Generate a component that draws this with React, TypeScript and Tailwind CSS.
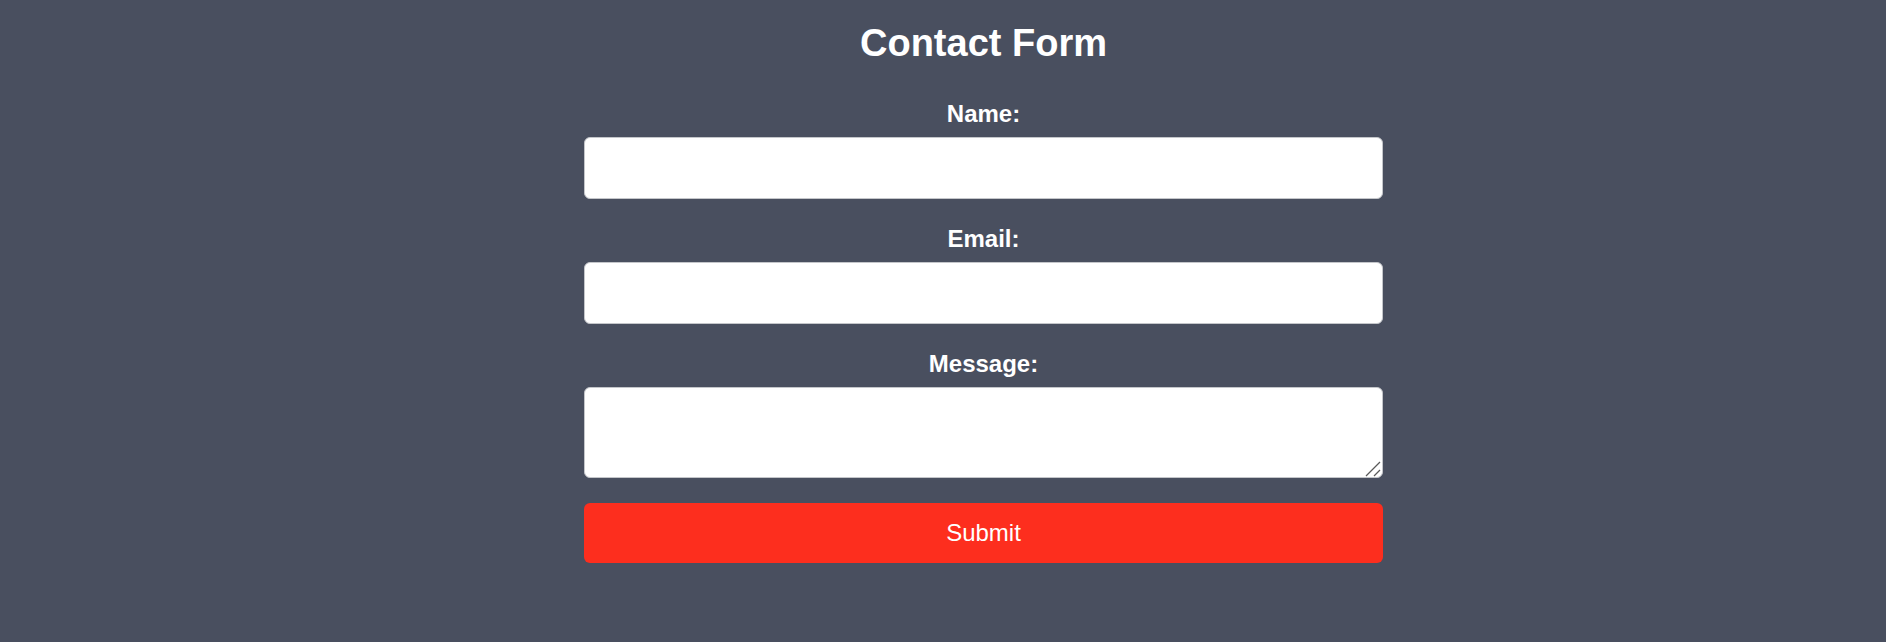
import React from "react";

export default function App() {
  return (
    <div
      className="w-full h-[642px] bg-[#494f5f] flex justify-center pl-[81px]"
      style={{ fontFamily: '"Liberation Sans", Arial, Helvetica, sans-serif' }}
    >
      <form
        className="w-[799px] flex flex-col"
        onSubmit={(e) => e.preventDefault()}
      >
        <h1 className="mt-[21px] text-[38px] leading-[44px] font-bold text-white text-center">
          Contact Form
        </h1>

        <label
          htmlFor="name"
          className="mt-[35px] mb-[9px] text-[24px] leading-[28px] font-bold text-white text-center"
        >
          Name:
        </label>
        <input
          id="name"
          type="text"
          className="h-[62px] w-full bg-white border border-[#c4c6ca] rounded-[6px] mb-[26px] outline-none"
        />

        <label
          htmlFor="email"
          className="mb-[9px] text-[24px] leading-[28px] font-bold text-white text-center"
        >
          Email:
        </label>
        <input
          id="email"
          type="email"
          className="h-[62px] w-full bg-white border border-[#c4c6ca] rounded-[6px] mb-[26px] outline-none"
        />

        <label
          htmlFor="message"
          className="mb-[9px] text-[24px] leading-[28px] font-bold text-white text-center"
        >
          Message:
        </label>
        <div className="relative mb-[25px]">
          <textarea
            id="message"
            className="h-[91px] w-full bg-white border border-[#c4c6ca] rounded-[6px] outline-none block resize-none"
          />
          <svg
            className="absolute right-[2px] bottom-[1px] pointer-events-none"
            width="16"
            height="16"
            viewBox="0 0 16 16"
          >
            <line x1="1" y1="15" x2="15" y2="1" stroke="#5a5a5a" strokeWidth="1.3" />
            <line x1="9" y1="15" x2="15" y2="9" stroke="#5a5a5a" strokeWidth="1.3" />
          </svg>
        </div>

        <button
          type="submit"
          className="h-[60px] w-full bg-[#fd2e1e] rounded-[6px] text-white text-[24px] flex items-center justify-center"
        >
          Submit
        </button>
      </form>
    </div>
  );
}
